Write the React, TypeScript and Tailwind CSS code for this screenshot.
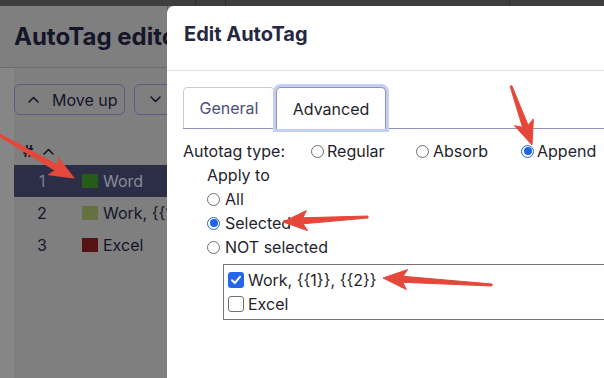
import React from "react";

type Arrow = { x1: number; y1: number; x2: number; y2: number };

function arrowPoints(a: Arrow, headLen = 24, headW = 10, tailW = 1, neckW = 3) {
  const dx = a.x2 - a.x1;
  const dy = a.y2 - a.y1;
  const len = Math.hypot(dx, dy);
  const ux = dx / len;
  const uy = dy / len;
  const nx = -uy;
  const ny = ux;
  const bx = a.x2 - ux * headLen;
  const by = a.y2 - uy * headLen;
  const bx2 = a.x2 - ux * (headLen - 4);
  const by2 = a.y2 - uy * (headLen - 4);
  const pts: [number, number][] = [
    [a.x1 + nx * tailW, a.y1 + ny * tailW],
    [bx2 + nx * neckW, by2 + ny * neckW],
    [bx + nx * headW, by + ny * headW],
    [a.x2, a.y2],
    [bx - nx * headW, by - ny * headW],
    [bx2 - nx * neckW, by2 - ny * neckW],
    [a.x1 - nx * tailW, a.y1 - ny * tailW],
  ];
  return pts.map((p) => `${p[0].toFixed(1)},${p[1].toFixed(1)}`).join(" ");
}

const arrows: Arrow[] = [
  { x1: -6, y1: 132, x2: 74, y2: 178 },
  { x1: 511, y1: 86, x2: 532, y2: 145 },
  { x1: 368, y1: 217, x2: 283, y2: 222 },
  { x1: 492, y1: 285, x2: 383, y2: 278 },
];

function Radio({ checked }: { checked?: boolean }) {
  if (checked) {
    return (
      <span className="w-[13px] h-[13px] rounded-full border border-[#1f63e6] bg-white flex items-center justify-center shrink-0">
        <span className="w-[8px] h-[8px] rounded-full bg-[#1f63e6]" />
      </span>
    );
  }
  return <span className="w-[13px] h-[13px] rounded-full border border-[#6f6f6f] bg-white shrink-0" />;
}

function Check({ checked }: { checked?: boolean }) {
  if (checked) {
    return (
      <span className="w-[16px] h-[16px] rounded-[3px] bg-[#2266ea] flex items-center justify-center shrink-0">
        <svg width="12" height="12" viewBox="0 0 12 12">
          <path d="M2 6.3 L4.8 9 L10 2.8" fill="none" stroke="white" strokeWidth="2" strokeLinecap="round" strokeLinejoin="round" />
        </svg>
      </span>
    );
  }
  return <span className="w-[16px] h-[16px] rounded-[3px] border border-[#6f6f6f] bg-white shrink-0" />;
}

function ChevronUp({ color = "#15152a" }: { color?: string }) {
  return (
    <svg className="shrink-0" width="11" height="7" viewBox="0 0 11 7">
      <path d="M1 6 L5.5 1.5 L10 6" fill="none" stroke={color} strokeWidth="1.6" strokeLinecap="round" strokeLinejoin="round" />
    </svg>
  );
}

function ChevronDown({ color = "#15152a" }: { color?: string }) {
  return (
    <svg className="shrink-0" width="11" height="7" viewBox="0 0 11 7">
      <path d="M1 1 L5.5 5.5 L10 1" fill="none" stroke={color} strokeWidth="1.6" strokeLinecap="round" strokeLinejoin="round" />
    </svg>
  );
}

const rows = [
  { n: "1", name: "Word", color: "#255c17", active: true },
  { n: "2", name: "Work, {{1}}, {{2}}", color: "#67703f", active: false },
  { n: "3", name: "Excel", color: "#561313", active: false },
];

export default function App() {
  return (
    <div
      className="relative w-[604px] h-[378px] overflow-hidden flex flex-col bg-[#7f7f7f]"
      style={{ fontFamily: "Inter, 'Noto Sans', sans-serif" }}
    >
      {/* top dark strip */}
      <div className="h-[6px] bg-[#3e3e3e] relative shrink-0">
        <div className="absolute left-[195px] top-0 w-px h-[6px] bg-[#2e2e2e]" />
        <div className="absolute left-[225px] top-0 w-px h-[6px] bg-[#2e2e2e]" />
        <div className="absolute left-[509px] top-0 w-px h-[6px] bg-[#2e2e2e]" />
      </div>

      <div className="flex flex-1 min-h-0">
        {/* left dimmed panel */}
        <div className="w-[168px] shrink-0 border-r border-[#5e5e5e] flex flex-col overflow-hidden">
          <div className="h-[62px] shrink-0 border-b border-[#6b6b6b] flex items-center pl-[14px]">
            <span className="text-[24px] font-bold text-[#15152a] whitespace-nowrap leading-none">AutoTag editor</span>
          </div>
          <div className="flex flex-1">
            <div className="w-[14px] bg-[#868686] shrink-0" />
            <div className="flex-1 pt-[16px] overflow-hidden">
              <div className="flex gap-[9px] h-[31px]">
                <div className="w-[111px] shrink-0 border border-[#575b80] rounded-[6px] flex items-center pl-[13px] gap-[13px]">
                  <ChevronUp />
                  <span className="text-[16px] text-[#15152a] whitespace-nowrap">Move up</span>
                </div>
                <div className="w-[130px] shrink-0 border border-[#575b80] rounded-[6px] flex items-center pl-[15px] gap-[13px]">
                  <ChevronDown />
                  <span className="text-[16px] text-[#15152a] whitespace-nowrap">Move down</span>
                </div>
              </div>
              <div className="mt-[22px] h-[28px] flex items-center pl-[9px] gap-[10px]">
                <span className="text-[16px] font-bold text-[#15152a]">#</span>
                <ChevronUp />
              </div>
              {rows.map((r) => (
                <div key={r.n} className={`h-[32px] flex items-center ${r.active ? "bg-[#2c2e48]" : ""}`}>
                  <span className={`w-[56px] shrink-0 text-center text-[16px] ${r.active ? "text-[#7c7c8a]" : "text-[#15152a]"}`}>{r.n}</span>
                  <span className="ml-[12px] w-[16px] h-[14px] shrink-0" style={{ backgroundColor: r.color }} />
                  <span className={`ml-[5px] text-[16px] whitespace-nowrap ${r.active ? "text-[#8a8a98]" : "text-[#15152a]"}`}>{r.name}</span>
                </div>
              ))}
            </div>
          </div>
        </div>

        {/* dialog */}
        <div className="flex-1 bg-white rounded-tl-[7px] flex flex-col overflow-hidden -ml-px">
          <div className="h-[65px] shrink-0 border-b border-[#dedede] pl-[17px] pt-[16px]">
            <span className="text-[20px] leading-[24px] font-bold text-[#25263f] whitespace-nowrap">Edit AutoTag</span>
          </div>
          <div className="pl-[16px] pt-[16px] text-[16px] text-[#1f1f2e]">
            <div className="flex h-[42px] border-b border-[#8d93bb] w-[440px]">
              <div className="w-[92px] h-[41px] shrink-0 border border-b-0 border-[#cacad3] rounded-t-[5px] flex items-center justify-center text-[#4b4f7c]">
                General
              </div>
              <div className="ml-px w-[110px] h-[42px] shrink-0 border border-b-0 border-[#8d93bb] rounded-t-[5px] flex items-center justify-center ring-[3px] ring-[#c3cff3] bg-white">
                Advanced
              </div>
            </div>
            <div className="pt-[10px]">
              <div className="flex items-center h-[24px]">
                <span className="w-[128px] shrink-0 whitespace-nowrap">Autotag type:</span>
                <div className="w-[105px] shrink-0 flex items-center gap-[3px]">
                  <Radio />
                  <span>Regular</span>
                </div>
                <div className="w-[105px] shrink-0 flex items-center gap-[4px]">
                  <Radio />
                  <span>Absorb</span>
                </div>
                <div className="w-[105px] shrink-0 flex items-center gap-[3px]">
                  <Radio checked />
                  <span>Append</span>
                </div>
              </div>
              <div className="pl-[24px]">
                <div className="h-[24px] flex items-center">Apply to</div>
                <div className="h-[24px] flex items-center gap-[5px]">
                  <Radio />
                  <span>All</span>
                </div>
                <div className="h-[24px] flex items-center gap-[5px]">
                  <Radio checked />
                  <span>Selected</span>
                </div>
                <div className="h-[24px] flex items-center gap-[5px]">
                  <Radio />
                  <span>NOT selected</span>
                </div>
                <div className="ml-[16px] mt-[5px] w-[420px] border border-[#777777] py-[3px] pl-[4px]">
                  <div className="h-[24px] flex items-center gap-[4px]">
                    <Check checked />
                    <span>Work, {"{{1}}"}, {"{{2}}"}</span>
                  </div>
                  <div className="h-[24px] flex items-center gap-[4px]">
                    <Check />
                    <span>Excel</span>
                  </div>
                </div>
              </div>
            </div>
          </div>
        </div>
      </div>

      {/* annotation arrows */}
      <svg className="absolute inset-0 pointer-events-none" width="604" height="378" viewBox="0 0 604 378">
        {arrows.map((a, i) => (
          <polygon key={i} points={arrowPoints(a)} fill="#e5473b" stroke="#e5473b" strokeWidth="1" strokeLinejoin="round" />
        ))}
      </svg>
    </div>
  );
}
